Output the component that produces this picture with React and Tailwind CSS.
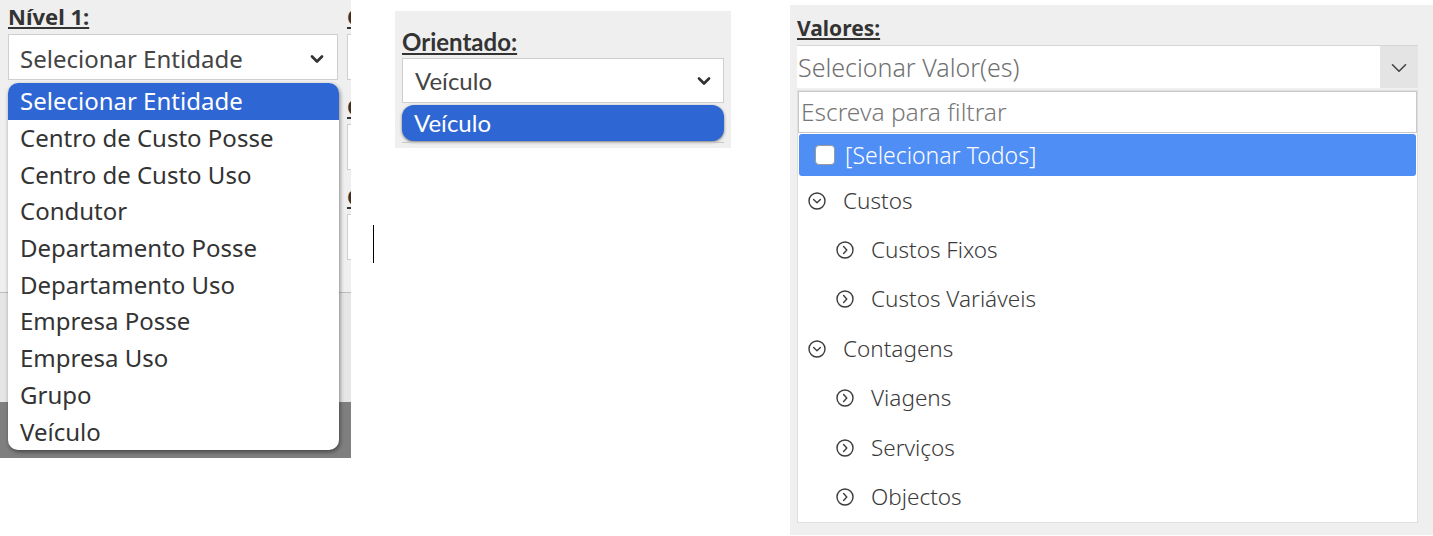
import { ChevronDown } from 'lucide-react';

const entidades = [
  'Selecionar Entidade',
  'Centro de Custo Posse',
  'Centro de Custo Uso',
  'Condutor',
  'Departamento Posse',
  'Departamento Uso',
  'Empresa Posse',
  'Empresa Uso',
  'Grupo',
  'Veículo',
];

const arvore = [
  { label: 'Custos', level: 0 },
  { label: 'Custos Fixos', level: 1 },
  { label: 'Custos Variáveis', level: 1 },
  { label: 'Contagens', level: 0 },
  { label: 'Viagens', level: 1 },
  { label: 'Serviços', level: 1 },
  { label: 'Objectos', level: 1 },
];

function CircleChevron({ open }) {
  return (
    <svg width="20" height="20" viewBox="0 0 20 20" fill="none" stroke="#3c3c3c" strokeWidth="1.4" strokeLinecap="round" strokeLinejoin="round">
      <circle cx="10" cy="10" r="8" />
      {open ? <path d="M6.6 8.6l3.4 3.2 3.4-3.2" /> : <path d="M8.6 6.6l3.2 3.4-3.2 3.4" />}
    </svg>
  );
}

// linha do formulário por baixo da lista (só a caixa, o texto fica tapado)
function FormRow({ label }) {
  return (
    <div className="h-[90px] pt-[3px]">
      <div className="h-[26px] text-[22px] leading-[26px] font-bold underline text-[#333] whitespace-nowrap">{label}</div>
      <div className="mt-[5px] h-[46px] bg-white border border-[#cfcfcf]" />
    </div>
  );
}

function NivelPanel() {
  return (
    <div className="relative w-[351px] h-[458px] overflow-hidden bg-[#efefef] font-['Noto_Sans',sans-serif]">
      <div className="h-[293px] border-b border-[#bdbdbd] pl-[8px] flex gap-[9px]">
        <div className="w-[330px] shrink-0">
          <div className="h-[90px] pt-[3px]">
            <div className="text-[22px] leading-[26px] font-bold underline text-[#333]">Nível 1:</div>
            <div className="mt-[5px] h-[46px] bg-white border border-[#cfcfcf] flex items-center justify-between pl-[11px] pr-[10px] pt-[3px]">
              <span className="text-[24px] text-[#444] leading-[30px]">Selecionar Entidade</span>
              <ChevronDown size={20} strokeWidth={3.2} color="#333" />
            </div>
          </div>
          <FormRow label="" />
          <FormRow label="" />
        </div>
        <div className="w-[330px] shrink-0">
          <FormRow label="Orientado:" />
          <FormRow label="Orientado:" />
          <FormRow label="Orientado:" />
        </div>
      </div>
      <div className="h-[109px] bg-[#e6e6e6]" />
      <div className="h-[56px] bg-[#7f7f7f]" />

      {/* lista aberta */}
      <div className="absolute left-[8px] top-[83px] w-[331px] rounded-[10px] bg-white overflow-hidden shadow-[1px_2px_4px_rgba(0,0,0,0.45)]">
        {entidades.map((e, i) => (
          <div
            key={e}
            className={
              i === 0
                ? 'h-[36.7px] flex items-center pl-[12px] bg-[#2e66d4] text-white text-[24px] leading-[30px]'
                : 'h-[36.7px] flex items-center pl-[12px] text-[#333] text-[24px] leading-[30px]'
            }
          >
            {e}
          </div>
        ))}
      </div>
    </div>
  );
}

function OrientadoPanel() {
  return (
    <div className="w-[336px] h-[137px] bg-[#efefef] px-[7px] pt-[17px] font-['Lato',sans-serif]">
      <div className="text-[24px] leading-[28px] font-bold underline text-[#333]">Orientado:</div>
      <div className="mt-[2px] h-[45px] bg-white border border-[#cfcfcf] flex items-center justify-between pl-[12px] pr-[9px]">
        <span className="text-[24px] text-[#444] leading-[24px]">Veículo</span>
        <ChevronDown size={20} strokeWidth={3.2} color="#333" />
      </div>
      <div className="mt-[2px] h-[36px] rounded-[12px] bg-[#2e66d4] flex items-center pl-[12px] shadow-[0_1px_3px_rgba(0,0,0,0.5)]">
        <span className="text-white text-[24px] leading-[24px]">Veículo</span>
      </div>
      <div className="mt-[1px] h-[1px] bg-[#c8c8c8]" />
    </div>
  );
}

function ValoresPanel() {
  return (
    <div className="w-[643px] h-[530px] bg-[#efefef] pl-[7px] pt-[10px] font-['Noto_Sans',sans-serif]">
      <div className="text-[21px] leading-[26px] font-bold underline text-[#333]">Valores:</div>
      <div className="mt-[4px] w-[621px] h-[43px] flex bg-white border-t border-[#d6d6d6]">
        <div className="flex-1 flex items-center pl-[1px] text-[25px] leading-[30px] text-[#707070] font-light">Selecionar Valor(es)</div>
        <div className="w-[38px] bg-[#e4e4e4] flex items-center justify-center pt-[2px]">
          <ChevronDown size={26} strokeWidth={1.5} color="#444" />
        </div>
      </div>
      <div className="mt-[2px] w-[621px] h-[433px] bg-white border border-[#dedede]">
        <div className="h-[42px] border border-[#c9c9c9] flex items-center pl-[2px] text-[24.5px] leading-[30px] text-[#777] font-light">
          Escreva para filtrar
        </div>
        <div className="mx-[1px] mt-[1px] h-[42px] rounded-[3px] bg-[#4f8ef5] flex items-center pl-[16px] gap-[10px]">
          <div className="w-[20px] h-[20px] rounded-[4px] bg-white border border-[#9a9a9a]" />
          <span className="text-[23px] leading-[28px] text-white font-light">[Selecionar Todos]</span>
        </div>
        {arvore.map((n) => (
          <div
            key={n.label}
            className={
              n.level === 0
                ? 'h-[49.4px] flex items-center gap-[16px] pl-[9px] text-[22.5px] leading-[28px] text-[#3a3a3a] font-light'
                : 'h-[49.4px] flex items-center gap-[16px] pl-[37px] text-[22.5px] leading-[28px] text-[#3a3a3a] font-light'
            }
          >
            <CircleChevron open={n.level === 0} />
            <span>{n.label}</span>
          </div>
        ))}
      </div>
    </div>
  );
}

export default function App() {
  return (
    <div className="w-[1433px] h-[536px] bg-white overflow-hidden flex items-start">
      <NivelPanel />
      <div className="ml-[22px] mt-[225px] w-px h-[38px] bg-black shrink-0" />
      <div className="ml-[21px] mt-[11px] shrink-0">
        <OrientadoPanel />
      </div>
      <div className="ml-[59px] mt-[5px] shrink-0">
        <ValoresPanel />
      </div>
    </div>
  );
}
